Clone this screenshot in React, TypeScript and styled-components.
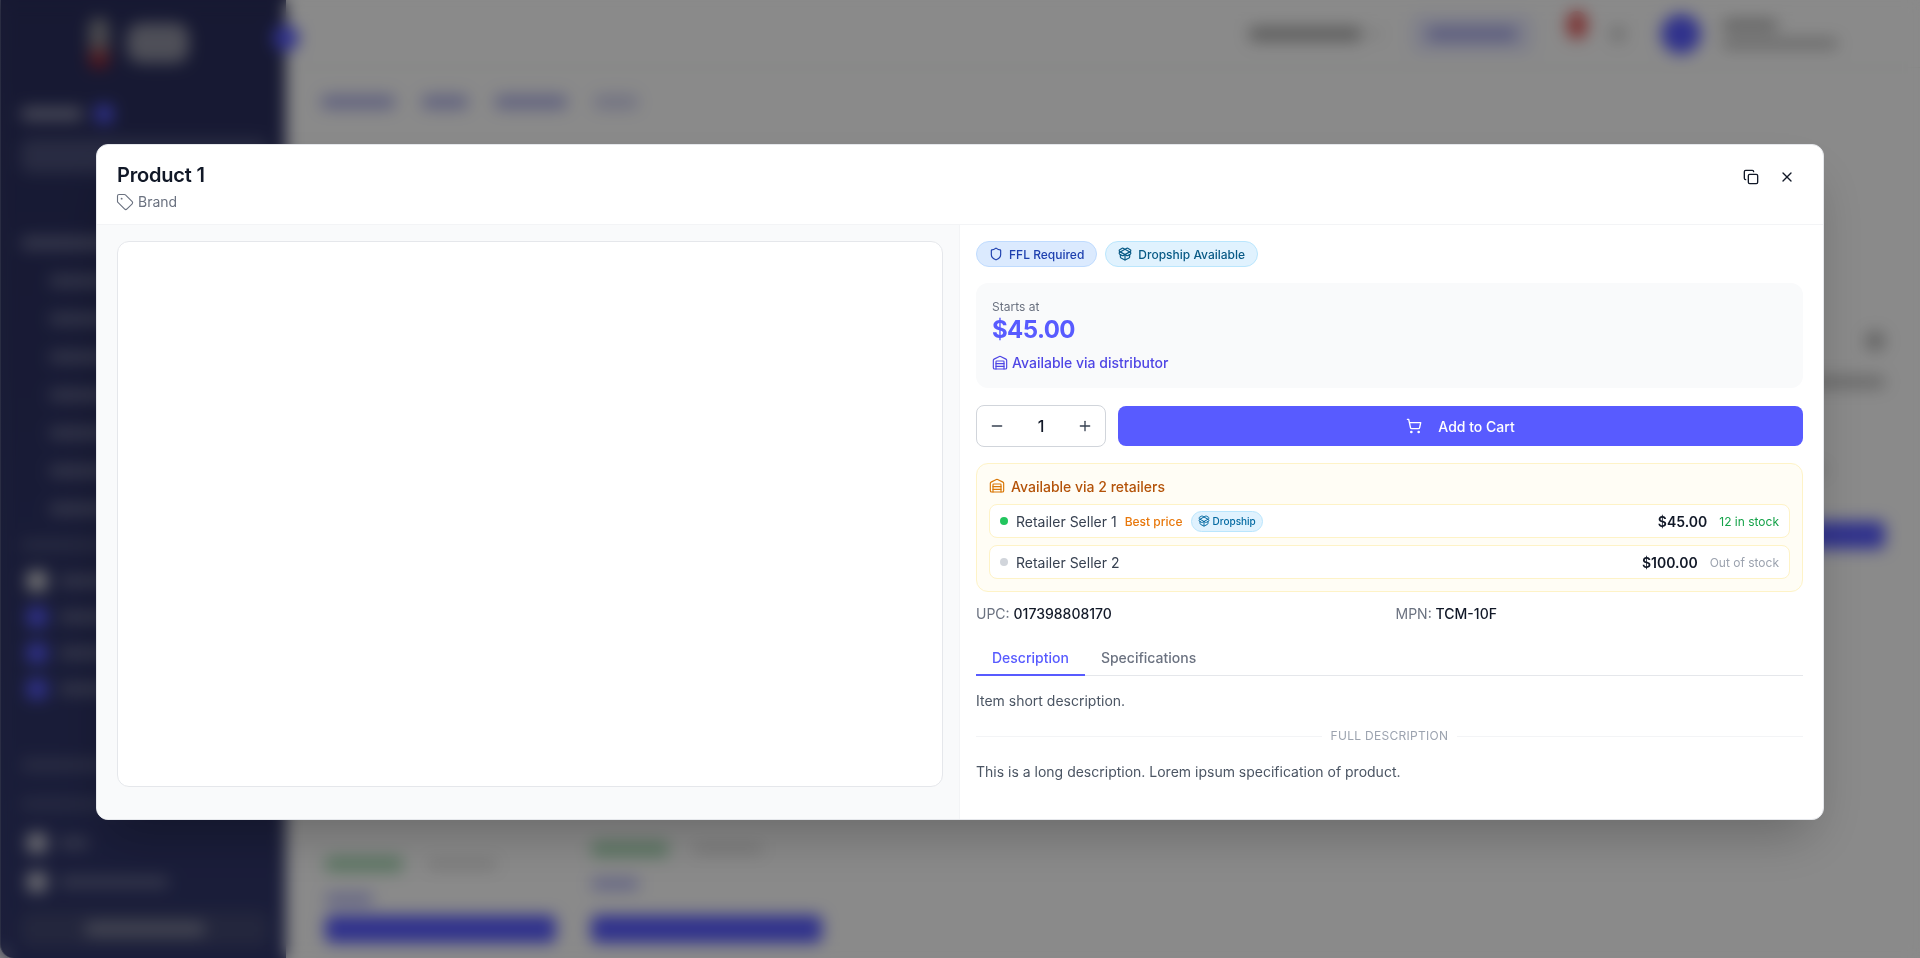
import styled, { createGlobalStyle } from "styled-components";
import { Copy, Minus, PackageOpen, Plus, Shield, ShoppingCart, Tag, Warehouse, X } from "lucide-react";

const GlobalStyle = createGlobalStyle`
    html, body {
        margin: 0;
        height: 100%;
        overflow: hidden;
        background: #f3f4f6;
        font-family: "Inter", "Liberation Sans", sans-serif;
    }
    * {
        box-sizing: border-box;
    }
`;

const brand = "#585bff";

/* ---- the page behind the dialog, only seen blurred ---- */

const Page = styled.div`
    display: flex;
    width: 1920px;
    height: 958px;
    overflow: hidden;
    background: #fbfbfb;
`;

const Sidebar = styled.aside`
    width: 286px;
    height: 958px;
    flex-shrink: 0;
    display: flex;
    flex-direction: column;
    padding: 15px 18px 0 20px;
    background: linear-gradient(#2a2e5c, #30366a);
    border-left: 1px solid #6b7090;
    border-bottom-left-radius: 14px;
`;

const LogoRow = styled.div`
    display: flex;
    align-items: center;
    gap: 18px;
    height: 56px;
    padding-left: 68px;
`;

const LogoMark = styled.div`
    width: 20px;
    height: 50px;
    border-radius: 8px;
    background: linear-gradient(#8a8a90 50%, #a0242c 85%);
`;

const LogoWord = styled.div`
    width: 62px;
    height: 40px;
    border-radius: 14px;
    background: #8f90a0;
`;

const Bar = styled.div<{ $w: number; $h?: number; $c?: string }>`
    width: ${(p) => p.$w}px;
    height: ${(p) => p.$h ?? 10}px;
    flex-shrink: 0;
    border-radius: 5px;
    background: ${(p) => p.$c ?? "#8e90a8"};
`;

const FilterRow = styled.div`
    display: flex;
    align-items: center;
    gap: 12px;
    margin-top: 34px;
`;

const SideInput = styled.div`
    height: 34px;
    margin-top: 16px;
    border-radius: 8px;
    background: #4b5079;
`;

const SideGroup = styled.div<{ $top: number; $gap: number }>`
    display: flex;
    flex-direction: column;
    gap: ${(p) => p.$gap}px;
    margin-top: ${(p) => p.$top}px;
`;

const SideItem = styled.div<{ $indent?: number }>`
    display: flex;
    align-items: center;
    gap: 12px;
    height: 22px;
    padding-left: ${(p) => p.$indent ?? 0}px;
`;

const SideIcon = styled.div<{ $c: string }>`
    width: 20px;
    height: 20px;
    border-radius: 5px;
    background: ${(p) => p.$c};
`;

const SideButton = styled.div`
    display: flex;
    align-items: center;
    justify-content: center;
    height: 34px;
    margin-top: auto;
    margin-bottom: 12px;
    border-radius: 8px;
    background: #41466f;
`;

const CollapseDot = styled.div`
    position: absolute;
    left: 273px;
    top: 25px;
    width: 26px;
    height: 26px;
    border-radius: 50%;
    background: ${brand};
`;

const Main = styled.main`
    flex: 1;
    min-width: 0;
    display: flex;
    flex-direction: column;
`;

const TopBar = styled.header`
    display: flex;
    align-items: center;
    justify-content: flex-end;
    height: 68px;
    padding: 0 82px 0 0;
    gap: 36px;
    border-bottom: 1px solid #eef0ee;
`;

const SelectBar = styled.div`
    display: flex;
    align-items: center;
    gap: 10px;
    margin-right: -3px;
`;

const OutlineBox = styled.div`
    display: flex;
    align-items: center;
    justify-content: center;
    width: 118px;
    height: 36px;
    border: 1px solid #c7c9f5;
    border-radius: 6px;
    background: #e8e9fd;
`;

const NotifyBadge = styled.div`
    width: 20px;
    height: 28px;
    margin: -18px -12px 0 0;
    border-radius: 10px;
    background: #e25a5a;
`;

const Avatar = styled.div`
    width: 40px;
    height: 40px;
    border-radius: 50%;
    background: ${brand};
`;

const UserText = styled.div`
    display: flex;
    flex-direction: column;
    gap: 9px;
    margin-left: -15px;
`;

const Crumbs = styled.nav`
    display: flex;
    align-items: center;
    gap: 27px;
    padding: 27px 0 0 35px;
`;

const ProductGrid = styled.div`
    display: grid;
    grid-template-columns: repeat(6, 1fr);
    gap: 0 35px;
    padding: 46px 35px 0 39px;
`;

const Card = styled.article`
    height: 394px;
    display: flex;
    flex-direction: column;
`;

const CardHead = styled.div`
    flex: 1;
    display: flex;
    flex-direction: column;
    align-items: flex-end;
    gap: 25px;
    padding: 176px 0 0;
`;

const QuickLook = styled.div`
    width: 20px;
    height: 20px;
    border-radius: 50%;
    background: #b4b4b4;
`;

const CardRow = styled.div`
    display: flex;
    align-items: center;
    gap: 24px;
`;

const CardPrice = styled.div<{ $wrapped?: boolean }>`
    margin: 21px 0 ${(p) => (p.$wrapped ? 25 : 10)}px;
`;

const CardButton = styled.div`
    height: 28px;
    border-radius: 6px;
    background: ${brand};
`;

function ProductCard({ wrapped }: { wrapped: boolean }) {
    return (
        <Card>
            <CardHead>
                <QuickLook />
                <Bar $w={100} $h={12} $c="#bdbdbd" />
            </CardHead>
            <CardRow>
                <Bar $w={78} $h={16} $c="#a7d8b4" />
                <Bar $w={70} $h={8} $c="#d5d5d5" />
            </CardRow>
            <CardPrice $wrapped={wrapped}>
                <Bar $w={48} $h={12} $c="#b5b7f2" />
            </CardPrice>
            <CardButton />
        </Card>
    );
}

/* ---- dialog ---- */

const Overlay = styled.div`
    position: fixed;
    inset: 0;
    display: flex;
    align-items: flex-start;
    justify-content: center;
    padding-top: 144px;
    background: rgba(0, 0, 0, 0.45);
    backdrop-filter: blur(8px);
`;

const Dialog = styled.div`
    width: 1728px;
    height: 676px;
    display: flex;
    flex-direction: column;
    overflow: hidden;
    background: #fff;
    border: 1px solid #e5e7eb;
    border-radius: 12px;
    box-shadow: 0 25px 50px -12px rgba(0, 0, 0, 0.25);
`;

const DialogHeader = styled.div`
    height: 80px;
    flex-shrink: 0;
    display: flex;
    justify-content: space-between;
    padding: 16px 20px 0;
    border-bottom: 1px solid #f3f4f6;
`;

const Title = styled.h2`
    margin: 0;
    font-size: 20px;
    line-height: 28px;
    font-weight: 600;
    letter-spacing: -0.2px;
    color: #111827;
`;

const BrandLine = styled.div`
    display: flex;
    align-items: center;
    gap: 4px;
    margin: 3px 0 0 -1px;
    font-size: 14px;
    line-height: 20px;
    color: #6b7280;
`;

const HeaderActions = styled.div`
    display: flex;
    gap: 4px;
`;

const IconButton = styled.button`
    width: 32px;
    height: 32px;
    display: flex;
    align-items: center;
    justify-content: center;
    padding: 0;
    border: none;
    background: none;
    color: #111827;
`;

const Body = styled.div`
    flex: 1;
    min-height: 0;
    display: grid;
    grid-template-columns: 1fr 1fr;
`;

const GalleryPane = styled.div`
    display: flex;
    padding: 16px 16px 32px 20px;
    background: #f9fafb;
    border-right: 1px solid #f3f4f6;
`;

const ImageBox = styled.div`
    flex: 1;
    background: #fff;
    border: 1px solid #e5e7eb;
    border-radius: 12px;
`;

const InfoPane = styled.div`
    display: flex;
    flex-direction: column;
    padding: 16px 20px 0 16px;
`;

const BadgeRow = styled.div`
    display: flex;
    gap: 8px;
`;

const Badge = styled.span<{ $bg: string; $line: string; $fg: string }>`
    display: inline-flex;
    align-items: center;
    gap: 6px;
    height: 26px;
    padding: 0 12px;
    font-size: 12px;
    font-weight: 500;
    color: ${(p) => p.$fg};
    background: ${(p) => p.$bg};
    border: 1px solid ${(p) => p.$line};
    border-radius: 999px;
`;

const PriceBox = styled.div`
    height: 105px;
    margin-top: 16px;
    padding: 16px;
    background: #f9fafb;
    border-radius: 12px;
`;

const StartsAt = styled.div`
    font-size: 12px;
    line-height: 16px;
    color: #6b7280;
`;

const BigPrice = styled.div`
    margin-top: 1px;
    font-size: 24px;
    line-height: 28px;
    font-weight: 700;
    letter-spacing: -0.6px;
    color: ${brand};
`;

const Distributor = styled.div`
    display: flex;
    align-items: center;
    gap: 4px;
    margin-top: 9px;
    font-size: 14px;
    line-height: 20px;
    font-weight: 500;
    color: #4f46e5;
`;

const BuyRow = styled.div`
    display: flex;
    align-items: center;
    gap: 12px;
    margin-top: 17px;
`;

const Stepper = styled.div`
    width: 130px;
    height: 42px;
    display: flex;
    align-items: center;
    justify-content: space-between;
    padding: 0 12px;
    border: 1px solid #d1d5db;
    border-radius: 8px;
    color: #374151;
`;

const Qty = styled.span`
    font-size: 16px;
    font-weight: 500;
    color: #111827;
`;

const CartButton = styled.button`
    flex: 1;
    height: 40px;
    display: flex;
    align-items: center;
    justify-content: center;
    gap: 16px;
    border: none;
    border-radius: 8px;
    background: ${brand};
    color: #fff;
    font-family: inherit;
    font-size: 14px;
    font-weight: 500;
`;

const RetailerBox = styled.div`
    height: 129px;
    margin-top: 16px;
    padding: 12px;
    background: #fffdf5;
    border: 1px solid #fef3c7;
    border-radius: 12px;
`;

const RetailerHead = styled.div`
    display: flex;
    align-items: center;
    gap: 6px;
    height: 20px;
    font-size: 14px;
    font-weight: 500;
    color: #b45309;
`;

const RetailerList = styled.div`
    display: flex;
    flex-direction: column;
    gap: 7px;
    margin-top: 8px;
`;

const RetailerRow = styled.div`
    height: 34px;
    display: flex;
    align-items: center;
    padding: 0 10px;
    background: #fff;
    border: 1px solid #fef3c7;
    border-radius: 8px;
`;

const Dot = styled.span<{ $c: string }>`
    width: 8px;
    height: 8px;
    border-radius: 50%;
    margin-right: 8px;
    background: ${(p) => p.$c};
`;

const SellerName = styled.span`
    font-size: 14px;
    color: #374151;
`;

const BestPrice = styled.span`
    margin-left: 8px;
    font-size: 12px;
    font-weight: 500;
    color: #e8780c;
`;

const MiniBadge = styled.span`
    display: inline-flex;
    align-items: center;
    gap: 3px;
    height: 21px;
    margin-left: 8px;
    padding: 0 6px;
    font-size: 10px;
    font-weight: 500;
    color: #0369a1;
    background: #e0f2fe;
    border: 1px solid #bae6fd;
    border-radius: 999px;
`;

const RowPrice = styled.span`
    margin-left: auto;
    font-size: 14px;
    font-weight: 600;
    color: #111827;
`;

const Stock = styled.span<{ $c: string }>`
    margin-left: 12px;
    font-size: 12px;
    color: ${(p) => p.$c};
`;

const CodeGrid = styled.div`
    display: grid;
    grid-template-columns: 1fr 1fr;
    gap: 12px;
    margin-top: 12px;
    font-size: 14px;
    line-height: 20px;
    color: #6b7280;
`;

const CodeValue = styled.span`
    font-weight: 500;
    color: #111827;
`;

const Tabs = styled.div`
    display: flex;
    margin-top: 16px;
    border-bottom: 1px solid #e5e7eb;
`;

const TabItem = styled.button<{ $active?: boolean }>`
    height: 36px;
    margin-bottom: -1px;
    padding: 0 16px;
    background: none;
    border: none;
    border-bottom: 2px solid ${(p) => (p.$active ? brand : "transparent")};
    font-family: inherit;
    font-size: 14px;
    font-weight: 500;
    color: ${(p) => (p.$active ? brand : "#6b7280")};
`;

const BodyText = styled.p<{ $top: number }>`
    margin: ${(p) => p.$top}px 0 0;
    font-size: 14px;
    line-height: 20px;
    color: #4b5563;
`;

const Divider = styled.div`
    display: flex;
    align-items: center;
    gap: 9px;
    margin-top: 17px;
    font-size: 12px;
    line-height: 16px;
    letter-spacing: 0.3px;
    color: #9ca3af;
    &::before,
    &::after {
        content: "";
        flex: 1;
        height: 1px;
        background: #f3f4f6;
    }
`;

export default function App() {
    return (
        <>
            <GlobalStyle />
            <Page>
                <Sidebar>
                    <LogoRow>
                        <LogoMark />
                        <LogoWord />
                    </LogoRow>
                    <FilterRow>
                        <Bar $w={62} $h={12} />
                        <Bar $w={18} $h={18} $c={brand} />
                    </FilterRow>
                    <SideInput />
                    <SideGroup $top={59} $gap={16}>
                        <SideItem><Bar $w={240} $h={12} $c="#6a6e90" /></SideItem>
                        {[0, 1, 2, 3, 4, 5, 6].map((i) => (
                            <SideItem key={i} $indent={28}><Bar $w={190} $h={10} $c="#6a6e90" /></SideItem>
                        ))}
                    </SideGroup>
                    <SideGroup $top={14} $gap={14}>
                        <SideItem><Bar $w={120} $h={8} $c="#555a80" /></SideItem>
                        <SideItem $indent={6}><SideIcon $c="#d8d8d8" /><Bar $w={160} $h={10} $c="#6a6e90" /></SideItem>
                        <SideItem $indent={6}><SideIcon $c={brand} /><Bar $w={160} $h={10} $c="#6a6e90" /></SideItem>
                        <SideItem $indent={6}><SideIcon $c={brand} /><Bar $w={160} $h={10} $c="#6a6e90" /></SideItem>
                        <SideItem $indent={6}><SideIcon $c={brand} /><Bar $w={160} $h={10} $c="#6a6e90" /></SideItem>
                    </SideGroup>
                    <SideGroup $top={54} $gap={17}>
                        <SideItem><Bar $w={160} $h={10} $c="#555a80" /></SideItem>
                        <SideItem><Bar $w={120} $h={8} $c="#555a80" /></SideItem>
                        <SideItem $indent={6}><SideIcon $c="#c9c9d2" /><Bar $w={30} $h={10} $c="#6a6e90" /></SideItem>
                        <SideItem $indent={6}><SideIcon $c="#c9c9d2" /><Bar $w={110} $h={10} $c="#6a6e90" /></SideItem>
                    </SideGroup>
                    <SideButton><Bar $w={120} $h={14} $c="#7e8199" /></SideButton>
                </Sidebar>
                <CollapseDot />
                <Main>
                    <TopBar>
                        <SelectBar>
                            <Bar $w={113} $h={14} $c="#a8a8a8" />
                            <Bar $w={8} $h={6} $c="#c4c4c4" />
                        </SelectBar>
                        <OutlineBox><Bar $w={90} $h={14} $c="#a5a7e6" /></OutlineBox>
                        <NotifyBadge />
                        <Bar $w={14} $h={14} $c="#c4c4c4" />
                        <Avatar />
                        <UserText>
                            <Bar $w={56} $h={10} $c="#a8a8a8" />
                            <Bar $w={116} $h={9} $c="#b5b5b5" />
                        </UserText>
                    </TopBar>
                    <Crumbs>
                        <Bar $w={74} $h={14} $c="#b0b2e8" />
                        <Bar $w={46} $h={14} $c="#b0b2e8" />
                        <Bar $w={72} $h={14} $c="#b0b2e8" />
                        <Bar $w={44} $h={14} $c="#cfd0ee" />
                    </Crumbs>
                    <ProductGrid>
                        {[0, 1, 2, 3, 4, 5, 6, 7].map((i) => (
                            <ProductCard key={i} wrapped={i === 7} />
                        ))}
                    </ProductGrid>
                </Main>
            </Page>
            <Overlay>
                <Dialog>
                    <DialogHeader>
                        <div>
                            <Title>Product 1</Title>
                            <BrandLine>
                                <Tag size={18} strokeWidth={1.5} />
                                Brand
                            </BrandLine>
                        </div>
                        <HeaderActions>
                            <IconButton><Copy size={16} /></IconButton>
                            <IconButton><X size={16} /></IconButton>
                        </HeaderActions>
                    </DialogHeader>
                    <Body>
                        <GalleryPane>
                            <ImageBox />
                        </GalleryPane>
                        <InfoPane>
                            <BadgeRow>
                                <Badge $bg="#dbeafe" $line="#bfdbfe" $fg="#1e40af">
                                    <Shield size={14} />
                                    FFL Required
                                </Badge>
                                <Badge $bg="#e0f2fe" $line="#bae6fd" $fg="#075985">
                                    <PackageOpen size={14} />
                                    Dropship Available
                                </Badge>
                            </BadgeRow>
                            <PriceBox>
                                <StartsAt>Starts at</StartsAt>
                                <BigPrice>$45.00</BigPrice>
                                <Distributor>
                                    <Warehouse size={16} strokeWidth={1.75} />
                                    Available via distributor
                                </Distributor>
                            </PriceBox>
                            <BuyRow>
                                <Stepper>
                                    <Minus size={16} />
                                    <Qty>1</Qty>
                                    <Plus size={16} />
                                </Stepper>
                                <CartButton>
                                    <ShoppingCart size={16} />
                                    Add to Cart
                                </CartButton>
                            </BuyRow>
                            <RetailerBox>
                                <RetailerHead>
                                    <Warehouse size={16} strokeWidth={1.75} color="#d97706" />
                                    Available via 2 retailers
                                </RetailerHead>
                                <RetailerList>
                                    <RetailerRow>
                                        <Dot $c="#22c55e" />
                                        <SellerName>Retailer Seller 1</SellerName>
                                        <BestPrice>Best price</BestPrice>
                                        <MiniBadge>
                                            <PackageOpen size={12} />
                                            Dropship
                                        </MiniBadge>
                                        <RowPrice>$45.00</RowPrice>
                                        <Stock $c="#16a34a">12 in stock</Stock>
                                    </RetailerRow>
                                    <RetailerRow>
                                        <Dot $c="#d1d5db" />
                                        <SellerName>Retailer Seller 2</SellerName>
                                        <RowPrice>$100.00</RowPrice>
                                        <Stock $c="#9ca3af">Out of stock</Stock>
                                    </RetailerRow>
                                </RetailerList>
                            </RetailerBox>
                            <CodeGrid>
                                <div>UPC: <CodeValue>017398808170</CodeValue></div>
                                <div>MPN: <CodeValue>TCM-10F</CodeValue></div>
                            </CodeGrid>
                            <Tabs>
                                <TabItem $active>Description</TabItem>
                                <TabItem>Specifications</TabItem>
                            </Tabs>
                            <BodyText $top={15}>Item short description.</BodyText>
                            <Divider>FULL DESCRIPTION</Divider>
                            <BodyText $top={18}>This is a long description. Lorem ipsum specification of product.</BodyText>
                        </InfoPane>
                    </Body>
                </Dialog>
            </Overlay>
        </>
    );
}
